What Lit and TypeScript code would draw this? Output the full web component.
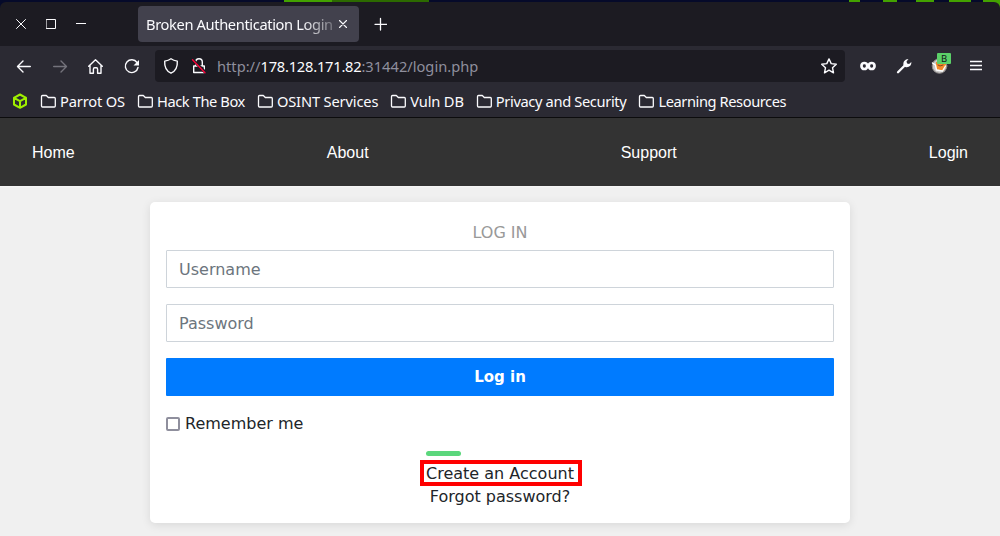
import { LitElement, html, css, svg } from "lit";
import { customElement } from "lit/decorators.js";
import { styleMap } from "lit/directives/style-map.js";

const bookmarks = [
  { label: "Parrot OS", tracking: -0.15 },
  { label: "Hack The Box", tracking: -0.42 },
  { label: "OSINT Services", tracking: -0.15 },
  { label: "Vuln DB", tracking: -0.15 },
  { label: "Privacy and Security", tracking: -0.36 },
  { label: "Learning Resources", tracking: -0.42 },
];
const links = ["Home", "About", "Support", "Login"];

const icon = (w: number, h: number, body: unknown) =>
  html`<svg width=${w} height=${h} viewBox="0 0 ${w} ${h}" fill="none" stroke="currentColor" stroke-width="1.4" stroke-linecap="round" stroke-linejoin="round">${body}</svg>`;

@customElement("browser-chrome")
class BrowserChrome extends LitElement {
  static styles = css`
    :host { display: block; height: 118px; box-sizing: border-box; background: #2b2a33; color: #fbfbfe; font: 14.67px/20px "Noto Sans", sans-serif; border-bottom: 1px solid #0c0c0d; }
    svg { display: block; flex: none; }
    .wallpaper { height: 8px; margin-bottom: -6px; background: linear-gradient(90deg, #050a2a 0 284px, #43a200 284px 332px, #2c6a00 332px 429px, #050a2a 429px 849px, #43a200 849px 860px, #050a2a 860px 883px, #43a200 883px 897px, #050a2a 897px 916px, #43a200 916px 934px, #050a2a 934px 949px, #43a200 949px 971px, #050a2a 971px 983px, #43a200 983px); }
    .tabs { position: relative; height: 44px; display: flex; align-items: center; background: #1c1b22; border-radius: 6px 6px 0 0; box-sizing: border-box; padding-left: 16px; }
    .controls { display: flex; gap: 20px; width: 122px; }
    .tab { display: flex; align-items: center; width: 221px; height: 36px; background: #42414d; border-radius: 4px; box-sizing: border-box; padding-left: 8px; }
    .title { width: 188px; white-space: nowrap; letter-spacing: -0.37px; -webkit-mask-image: linear-gradient(90deg, #000 155px, rgba(0,0,0,.25) 188px); }
    .plus { margin-left: 14px; }
    .bar { display: flex; align-items: center; height: 40px; padding: 0 14px 0 15px; }
    .nav { display: flex; gap: 18px; width: 140px; }
    .dim { color: #74737c; }
    .url { display: flex; align-items: center; width: 690px; height: 32px; box-sizing: border-box; background: #1c1b22; border-radius: 4px; padding: 0 7px 0 7px; }
    .lock { margin-left: 10px; }
    .address { flex: 1; margin-left: 9px; color: #8f8f9d; white-space: pre; }
    .host { color: #fbfbfe; letter-spacing: -0.22px; }
    .tools { display: flex; align-items: center; gap: 18px; margin-left: 14px; }
    .ext { position: relative; }
    .badge { position: absolute; left: 6px; top: -4px; width: 14px; height: 11px; background: #5bd068; border-radius: 1px; color: #15141a; font-size: 9.5px; line-height: 11px; text-align: center; }
    .marks { display: flex; align-items: center; height: 30px; padding-left: 12px; }
    .mark { display: flex; align-items: center; gap: 3px; margin-left: 12px; white-space: nowrap; }
  `;
  render() {
    return html`
      <div class="wallpaper"></div>
      <div class="tabs">
        <div class="controls">
          ${icon(10, 10, svg`<path stroke-width="1" d="M.5 .5 9.5 9.5M9.5 .5 .5 9.5"/>`)}
          ${icon(10, 10, svg`<path stroke-linejoin="miter" stroke-width="1" d="M.5 .5h9v9h-9z"/>`)}
          ${icon(10, 10, svg`<path stroke-width="1" stroke-linecap="butt" d="M0 4.5h10"/>`)}
        </div>
        <div class="tab">
          <div class="title">Broken Authentication Login</div>
          ${icon(18, 10, svg`<path stroke-width="1.1" d="m5.5 1.500 7 7m0-7-7 7"/>`)}
        </div>
        <div class="plus">${icon(14, 14, svg`<path stroke-width="1.3" d="M7.5 1.500v11.500M2 7.300h11.500"/>`)}</div>
      </div>
      <div class="bar">
        <div class="nav">
          ${icon(18, 18, svg`<path d="M15.3 9.500H2.8M8 4 2.5 9.500 8 15"/>`)}
          <span class="dim">${icon(18, 18, svg`<path d="M2.7 9.500h12.5M10 4 15.5 9.500 10 15"/>`)}</span>
          ${icon(18, 18, svg`<path d="M1.700 9.200 8.500 2.800l6.800 6.400M3 8.500v7.800h3.400v-4.100c0-1 .4-1.400 1.200-1.400h1.800c.8 0 1.200.4 1.200 1.400v4.100H14V8.500"/>`)}
          ${icon(18, 18, svg`<path d="M14 5.500A6.400 6.400 0 1 0 15 10.500"/><path fill="currentColor" stroke="none" d="M16 3v5.500h-5.500z"/>`)}
        </div>
        <div class="url">
          ${icon(18, 18, svg`<path d="M9 1.8c2 1.5 4 2 6.3 2.3.4 5.600-1.600 9.900-6.300 12.100C4.300 14 2.300 9.700 2.700 4.100 5 3.800 7 3.300 9 1.800z"/>`)}
          <span class="lock">${icon(18, 18, svg`<path d="M3.700 9h10.600v6.500H3.700zM5.700 8.700V5.100a3.300 3.300 0 0 1 6.600 0v3.600"/><path stroke="#1c1b22" stroke-width="3" d="m3 3 12.500 12.500"/><path stroke="#ff0039" stroke-width="1.300" d="m2.500 2.800 12.500 13"/>`)}</span>
          <div class="address">http://<span class="host">178.128.171.82</span>:31442/login.php</div>
          ${icon(18, 18, svg`<path d="m9 1.900 2.200 4.700 5.100.6-3.800 3.500 1 5.100L9 13.200l-4.500 2.600 1-5.100-3.800-3.500 5.100-.6z"/>`)}
        </div>
        <div class="tools">
          ${icon(18, 18, svg`<rect x="2.500" y="6" width="5.700" height="6" rx="2.800" stroke-width="2.700"/><rect x="9.800" y="6" width="5.700" height="6" rx="2.800" stroke-width="2.700"/>`)}
          ${icon(18, 18, svg`<path stroke-width="2.300" d="m3 15.200 7-7"/><path fill="currentColor" stroke="none" d="M8.500 8.500C7.800 4.800 9.800 2.200 13.500 2l-2 2.500.6 2 2 .6L16.300 5c.5 3.500-2.600 6-6 5z"/>`)}
          <div class="ext">
            ${icon(18, 18, svg`<circle cx="8.500" cy="9" r="7.300" fill="#c9c8c8" stroke="#8e8987" stroke-width="1"/><path stroke="none" fill="#f58b2b" d="m5 5 10-1v6l-3 4-7-2z"/><path stroke="#fff" d="m1.500 6 3 2 1 5 6 1 3-5"/><path stroke="#7e4a25" stroke-width="1" d="m7 8 2 1 3-1"/>`)}
            <div class="badge">B</div>
          </div>
          ${icon(18, 18, svg`<path stroke-width="1.300" stroke-linecap="butt" d="M3 4.500h12M3 8.500h12M3 12.500h12"/>`)}
        </div>
      </div>
      <div class="marks">
        ${icon(16, 16, svg`<path stroke="#9fef00" stroke-width="2" d="m8 1.500 6 3.300v6.700L8 14.800l-6-3.300V4.800zM2 4.800l6 3.400 6-3.400M8 8.200v6.600"/>`)}
        ${bookmarks.map((b) => html`<div class="mark">${icon(17, 16, svg`<path stroke-width="1.300" d="M1.500 13v-9.500c0-.6.4-1 1-1h3.800l2 2h6c.6 0 1 .4 1 1V13c0 .6-.4 1-1 1H2.500c-.6 0-1-.4-1-1z"/>`)}<span style=${styleMap({ letterSpacing: b.tracking + "px" })}>${b.label}</span></div>`)}
      </div>`;
  }
}

@customElement("app-root")
class AppRoot extends LitElement {
  static styles = css`
    :host { display: block; height: 536px; overflow: hidden; background: #f0f0f0; color: #212529; font: 16px/24px "DejaVu Sans", sans-serif; }
    * { box-sizing: border-box; }
    .menu { height: 68px; background: #333; display: flex; align-items: center; justify-content: space-between; padding: 2px 32px 0; color: #fff; font-family: "Liberation Sans", Arial, sans-serif; }
    .strip { height: 5px; background: linear-gradient(#f8f8f8, #f0f0f0 2px); margin-bottom: 11px; }
    .card { width: 700px; height: 321px; margin: 0 auto; background: #fff; border-radius: 5px; padding: 18px 16px 0; box-shadow: 0 2px 10px rgba(0,0,0,.1); display: flex; flex-direction: column; }
    .card > * { flex: none; }
    .heading { height: 30px; line-height: 25px; text-align: center; color: #999; }
    .field { display: block; width: 100%; height: 38px; margin: 0 0 16px; padding: 0 12px; border: 1px solid #ced4da; border-radius: 1px; font: inherit; outline: none; }
    .field::placeholder { color: #6c757d; opacity: 1; }
    .submit { height: 38px; border: 0; border-radius: 1px; background: #007bff; color: #fff; font: bold 15px/24px "DejaVu Sans", sans-serif; }
    .remember { display: flex; align-items: center; gap: 5px; height: 24px; margin-top: 16px; }
    .check { appearance: none; width: 14px; height: 14px; margin: 0; border: 2px solid #8f8f9d; border-radius: 2px; background: #fff; }
    .actions { width: 162px; margin: 15px 0 0 254px; display: flex; flex-direction: column; }
    .accent { width: 35px; height: 5px; border-radius: 3px; background: #5bd77c; margin: 0 0 4px 6px; }
    .create { height: 26px; border: 4px solid #f00; line-height: 19px; white-space: nowrap; display: flex; justify-content: center; padding-right: 2px; }
    .forgot { text-align: center; line-height: 22px; white-space: nowrap; padding-right: 2px; }
  `;
  render() {
    return html`
      <browser-chrome></browser-chrome>
      <nav class="menu">${links.map((l) => html`<span>${l}</span>`)}</nav>
      <div class="strip"></div>
      <main class="card">
        <div class="heading">LOG IN</div>
        <input class="field" placeholder="Username" />
        <input class="field" type="password" placeholder="Password" />
        <button class="submit">Log in</button>
        <label class="remember"><input class="check" type="checkbox" />Remember me</label>
        <div class="actions">
          <div class="accent"></div>
          <div class="create">Create an Account</div>
          <div class="forgot">Forgot password?</div>
        </div>
      </main>`;
  }
}
